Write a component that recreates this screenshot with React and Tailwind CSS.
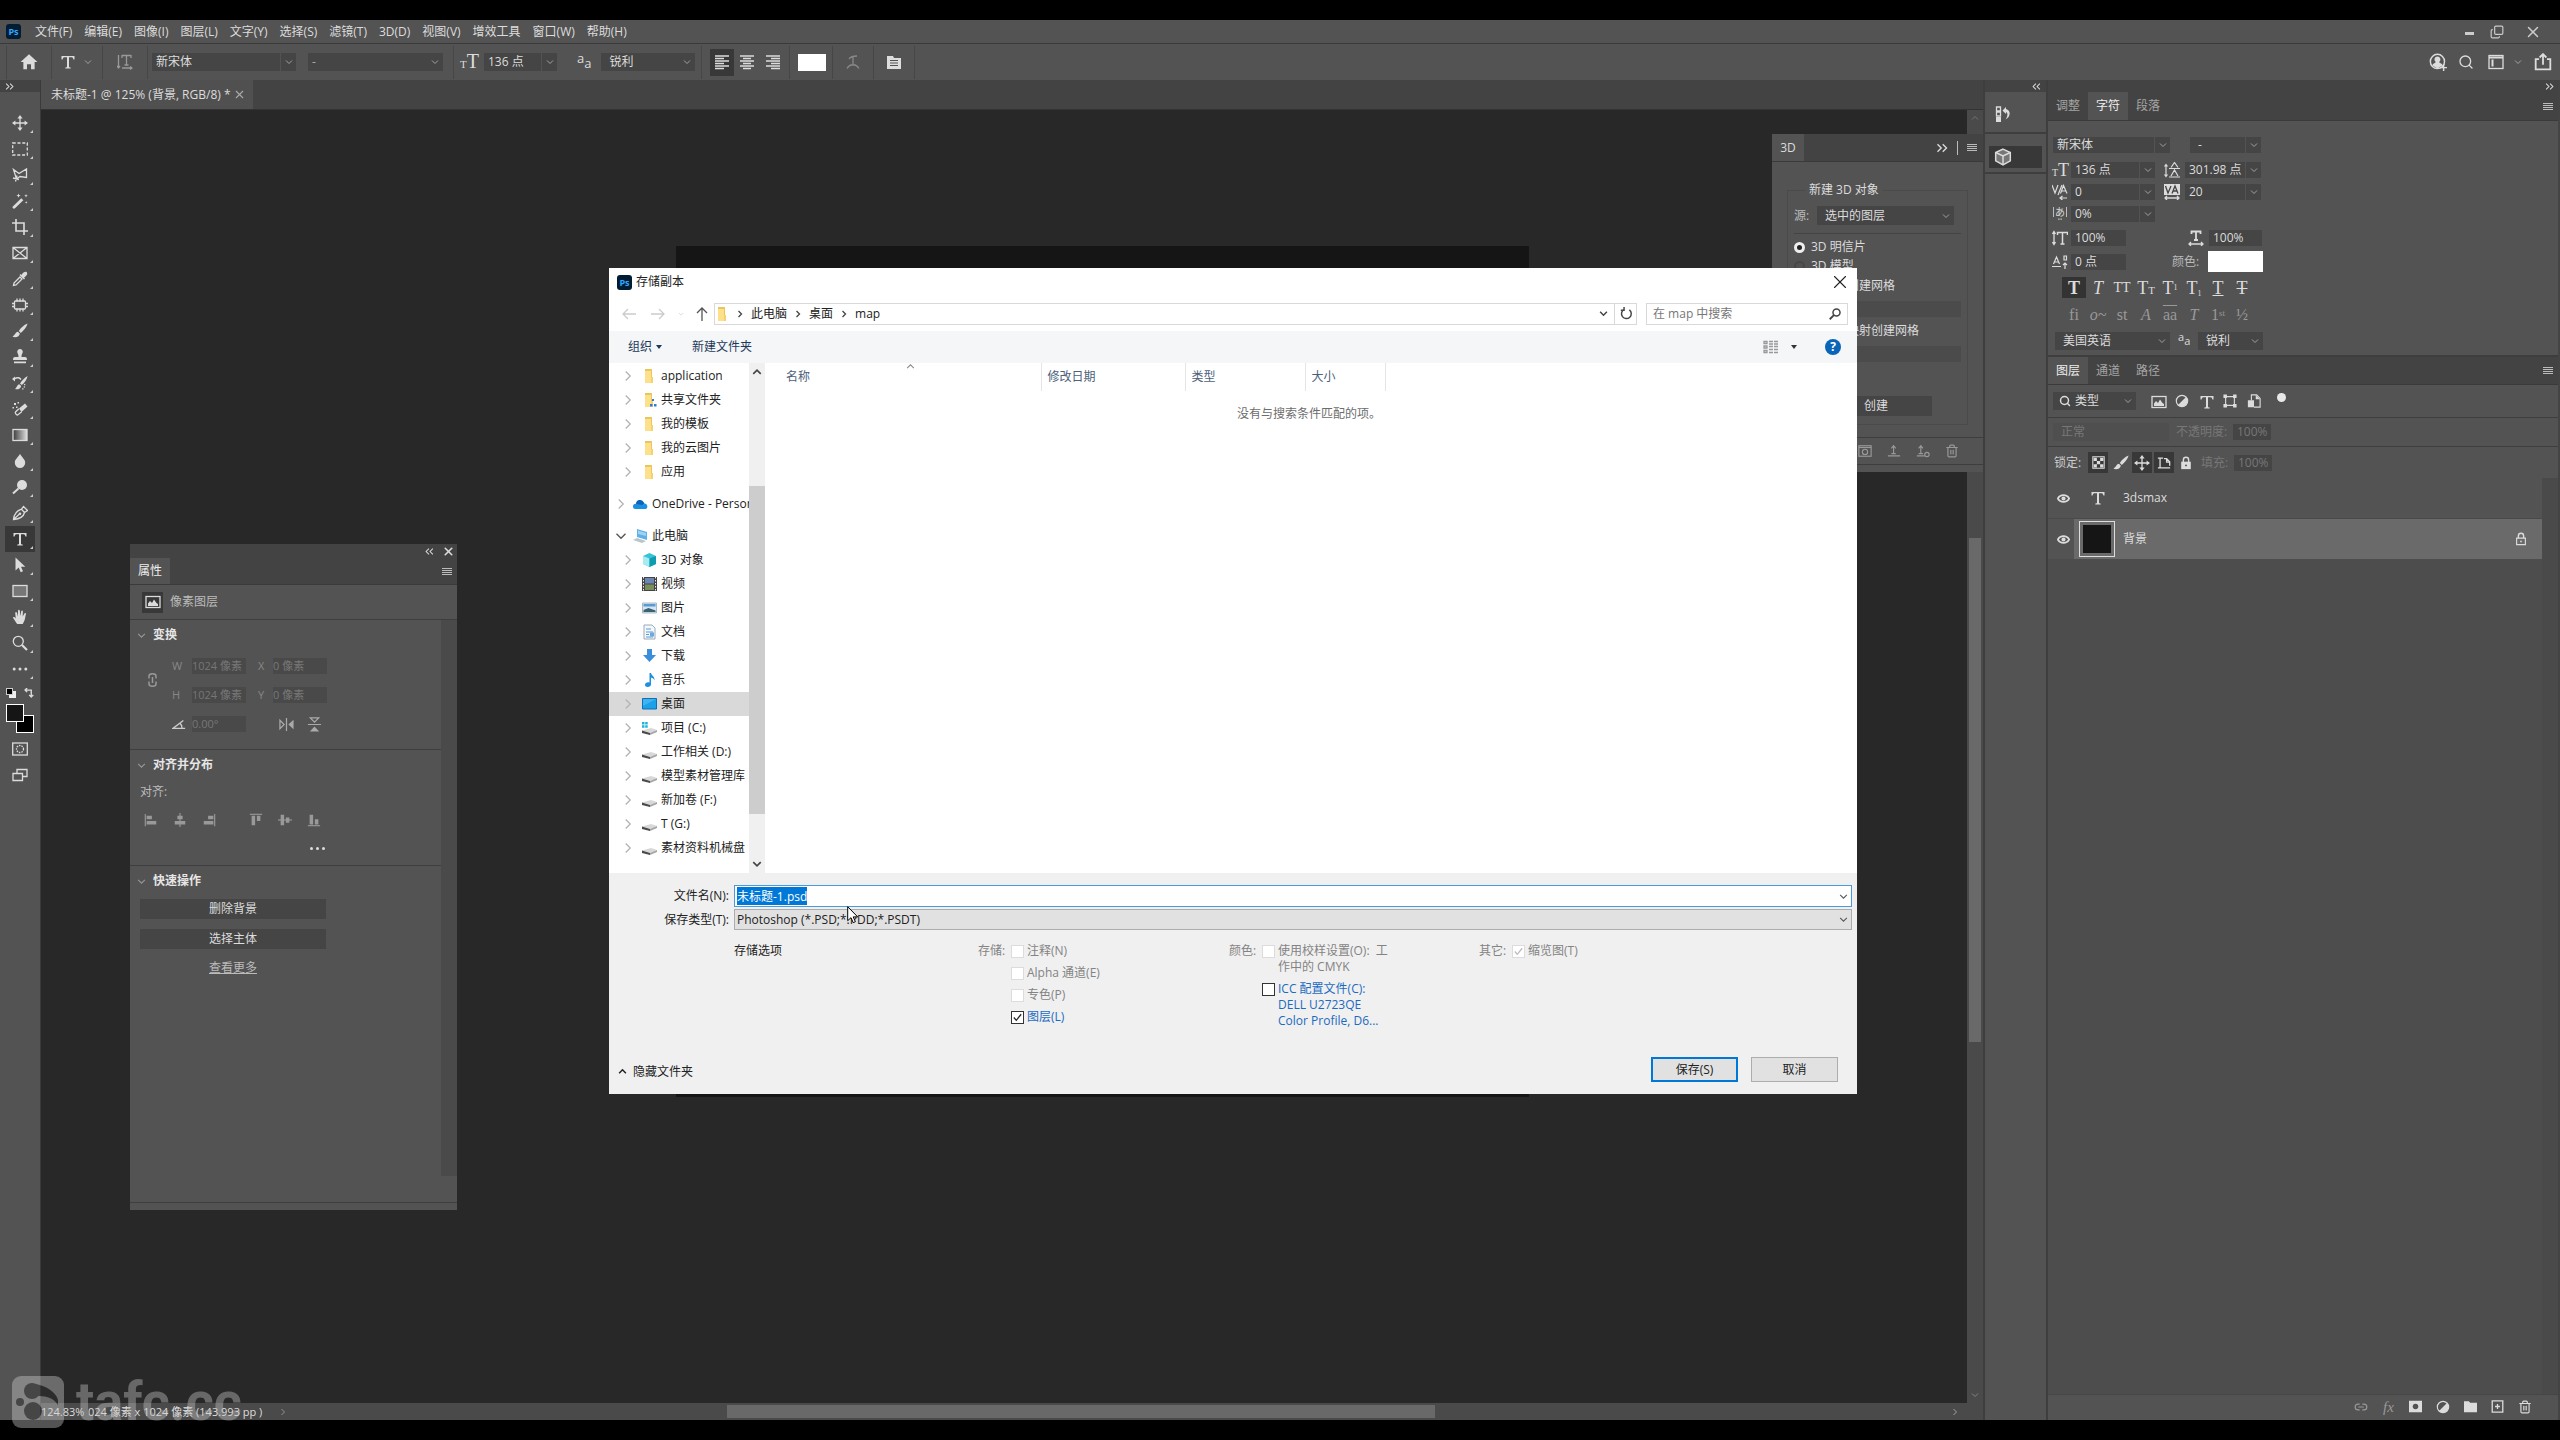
import React, { useEffect, useRef } from 'react';
import { Search, X, Copy, Trash2, Link2 } from 'lucide-react';

/** Small 16x16 stroke icon wrapper used by every hand drawn glyph. */
function Ic({ children, className = 'size-4' }) {
  return (
    <svg viewBox="0 0 16 16" className={`${className} shrink-0`} fill="none" stroke="currentColor" strokeWidth="1.3">
      {children}
    </svg>
  );
}

const F = { fill: 'currentColor', stroke: 'none' };

function Chev({ className = 'size-[9px]', bold }) {
  return (
    <svg viewBox="0 0 16 16" className={`${className} shrink-0`} fill="none" stroke="currentColor" strokeWidth={bold ? 2.6 : 1.8}>
      <path d="M2 5l6 6 6-6" />
    </svg>
  );
}

function Chevs({ className = 'size-[10px]' }) {
  return (
    <svg viewBox="0 0 16 16" className={`${className} shrink-0`} fill="none" stroke="currentColor" strokeWidth="1.8">
      <path d="M2 3l5 5-5 5M9 3l5 5-5 5" />
    </svg>
  );
}

function PsLogo() {
  return (
    <span className="flex size-[15px] shrink-0 items-center justify-center rounded-[3px] bg-[#001d33] text-[9px] leading-none font-bold text-[#31a8ff]">
      Ps
    </span>
  );
}

/** Dark drop-down used in the option bar and panels. */
function DarkSelect({ label, value, className = '', split, dim }) {
  return (
    <div className={`relative shrink-0 bg-[#454545] ${className}`}>
      <select
        aria-label={label}
        disabled={dim}
        className="block size-full appearance-none truncate bg-transparent pr-4 pl-1 text-xs leading-4 outline-none"
      >
        <option>{value}</option>
      </select>
      <span
        className={`pointer-events-none absolute inset-y-0 right-0 flex w-4 items-center justify-center ${split ? 'border-l border-[#535353]' : ''}`}
      >
        <Chev className="size-2 text-[#aaa]" />
      </span>
    </div>
  );
}

function DarkInput({ label, value, className = '', disabled }) {
  return (
    <input
      aria-label={label}
      defaultValue={value}
      disabled={disabled}
      className={`h-4 shrink-0 bg-[#454545] px-1 text-xs leading-4 outline-none ${className}`}
    />
  );
}

function MenuLines() {
  return (
    <button aria-label="面板菜单" className="flex w-[10px] flex-col gap-px">
      <span className="h-px bg-[#bbb]" />
      <span className="h-px bg-[#bbb]" />
      <span className="h-px bg-[#bbb]" />
      <span className="h-px bg-[#bbb]" />
    </button>
  );
}

/* ---------- icons ---------- */

const moveIcon = (
  <Ic>
    <path d="M8 2v12M2 8h12" />
    <path {...F} d="M8 0l2.6 3.4H5.4zM8 16l2.6-3.4H5.4zM0 8l3.4-2.6v5.2zM16 8l-3.4-2.6v5.2z" />
  </Ic>
);
const brushIcon = (
  <Ic>
    <path {...F} d="M15.6.6C12 2 8.4 5.2 6.8 8l2 1.9C11.600 8 14.600 4.400 15.600.6zM6 8.800c-2.600.1-2.400 2.600-5.500 5 2.800 1 6.500.4 7.400-3z" />
  </Ic>
);
const typeIcon = (
  <Ic>
    <path {...F} d="M1.500 2h13v3.600h-1.100c-.3-1.700-.8-2.300-2.400-2.300H9v9.200c0 .8.500 1 1.700 1.100v.9H5.300v-.9c1.200-.1 1.700-.3 1.700-1.100V3.300H5c-1.600 0-2.100.6-2.400 2.300H1.500z" />
  </Ic>
);
const pictureIcon = (
  <Ic>
    <rect x="1" y="2.500" width="14" height="11" />
    <path {...F} d="M3 12V9.500l2-2.500 2 2 2-3.500 2.500 3.500L13 10v2z" />
  </Ic>
);
const halfCircleIcon = (
  <Ic className="size-[14px]">
    <circle cx="8" cy="8" r="6.500" />
    <path {...F} d="M12.600 3.400a6.500 6.500 0 0 1-9.200 9.200z" />
  </Ic>
);

const tools = [
  { name: '移动', icon: moveIcon },
  { name: '矩形选框', icon: <Ic><rect x=".7" y="2" width="14.600" height="12" strokeDasharray="3 1.800" /></Ic> },
  { name: '套索', icon: <Ic><path d="M1.500 2.500l5.500 4 7.500-4.500v8.500L8 9.500 4.500 12zM5 8.500l-1.500 6M1 11l6 1.500" /></Ic> },
  {
    name: '魔棒',
    icon: (
      <Ic>
        <path {...F} d="M.8 13.500L9.300 5.200l2 2L3 15.300c-1.500 1-3.200-.4-2.200-1.800z" />
        <path {...F} d="M6.500.5l.6 1.500 1.500.6-1.500.6-.6 1.500-.6-1.500L4.400 2.600l1.500-.6zM14 1l.5 1.200 1.300.5-1.300.5L14 4.500l-.5-1.300-1.200-.5 1.200-.5zM14.200 8l.4 1 1 .4-1 .4-.4 1-.4-1-1-.4 1-.4z" />
      </Ic>
    ),
  },
  { name: '裁剪', icon: <Ic><path strokeWidth="1.600" d="M4 0v12h12M0 4h12v12" /></Ic> },
  { name: '图框', icon: <Ic><path d="M1 2.500h14v11H1zM1 2.500l14 11M15 2.500l-14 11" /></Ic> },
  {
    name: '吸管',
    icon: (
      <Ic>
        <path d="M1.500 14.500l.5-2.500 6-6 2 2-6 6z" />
        <path {...F} d="M7.500 4l1-1 1 .9C11 1.500 12.500.4 14.300.7c1.600 1.400 1.400 3.300-2.200 5.800l.9 1-1 1z" />
      </Ic>
    ),
  },
  {
    name: '修补',
    icon: (
      <Ic>
        <rect x="2.500" y="4" width="11" height="8" rx="1" />
        <path d="M5 1.500v3M8 1.500v3M11 1.500v3M5 11.500v3M8 11.500v3M11 11.500v3M0 6.500h3M0 9.500h3M13 6.500h3M13 9.500h3" />
      </Ic>
    ),
  },
  { name: '画笔', icon: brushIcon },
  {
    name: '图章',
    icon: (
      <Ic>
        <path {...F} d="M8 0a2.800 2.800 0 0 1 2.600 3.800C10 5 9.500 6 9.500 8H13c1.500 0 2 .8 2 3H1c0-2.200.5-3 2-3h3.500c0-2-.5-3-1.100-4.200A2.800 2.800 0 0 1 8 0zM2 12.500h12v1.800H2z" />
      </Ic>
    ),
  },
  {
    name: '历史记录画笔',
    icon: (
      <Ic>
        <path {...F} d="M15.600 1C12.500 2.500 9.500 6 8 8.500l1.800 1.600C12.500 8 15 4.500 15.600 1zM7.300 9.200c-2 .1-1.800 2.400-4.300 4.800 2.400.8 5.600.2 6.200-3zM0 4l3-2.500V6.500z" />
        <path d="M2.500 4c2.500-2 5-1.500 6.500.5" />
        <path strokeDasharray="1.200 1.200" d="M12.500 9c.8 2-.5 4.500-2.500 5.500" />
      </Ic>
    ),
  },
  {
    name: '橡皮擦',
    icon: (
      <Ic>
        <path {...F} d="M7 7.500l6-5 2.500 3-6 5.500z" />
        <path d="M6.800 7.800L3.500 11c-.8 1 .8 3.300 2.200 3l4-3.300" />
        <path {...F} d="M2 2h2v2H2zM5.500 1h1.500v1.500H5.500zM.5 6H2v1.500H.5zM4 5.500h1.500V7H4z" />
      </Ic>
    ),
  },
  {
    name: '渐变',
    icon: (
      <Ic>
        <defs>
          <linearGradient id="ramp"><stop stopColor="#3b3b3b" /><stop offset="1" stopColor="#ddd" /></linearGradient>
        </defs>
        <rect x="1" y="2.500" width="14" height="11" fill="url(#ramp)" />
      </Ic>
    ),
  },
  { name: '模糊', icon: <Ic><path {...F} d="M8 .8c1 3 5.200 5 5.200 9a5.200 5.200 0 0 1-10.400 0c0-4 4.200-6 5.200-9z" /></Ic> },
  { name: '减淡', icon: <Ic><circle {...F} cx="10" cy="6" r="5" /><path strokeWidth="2" d="M6.500 9.500L1 14.500" /></Ic> },
  {
    name: '钢笔',
    icon: (
      <Ic>
        <path d="M1.500 14.500C2 9.500 4 6 9.500 4.200l3 3.300C11.500 12 7.500 14 1.500 14.500zL7.500 9M9.500 4.200L11.500 1.500l4 4-3 2" />
        <circle {...F} cx="8" cy="8.800" r="1.300" />
      </Ic>
    ),
  },
  { name: '文字', icon: typeIcon, active: true },
  { name: '路径选择', icon: <Ic><path {...F} d="M3.500.5v13l3.200-3 2 4.800 2.300-1-2-4.600h4.300z" /></Ic> },
  { name: '矩形', icon: <Ic><rect x="1" y="2.500" width="14" height="11" fill="#777" /></Ic> },
  {
    name: '抓手',
    icon: (
      <Ic>
        <path {...F} d="M5.200 15C3.500 13 2.500 11 .8 8.600c.8-1 2-.6 3 .9L3.200 4c.1-1.200 1.500-1.200 1.800 0l.9 3.500L6 1.800c.1-1.300 1.700-1.300 1.800 0L8.300 7l.9-4.700c.3-1.200 1.700-1 1.700.2L10.700 7.500l1.700-3c.6-1 1.800-.5 1.500.6-.8 3.400-.9 7-3.200 9.900z" />
      </Ic>
    ),
  },
  { name: '缩放', icon: <Ic><circle cx="6.300" cy="6.300" r="5" /><path strokeWidth="2.200" d="M10 10l5 5" /></Ic> },
  { name: '更多工具', icon: <Ic><circle {...F} cx="2.200" cy="8" r="1.500" /><circle {...F} cx="8" cy="8" r="1.500" /><circle {...F} cx="13.800" cy="8" r="1.500" /></Ic> },
];

/* ---------- top bars ---------- */

const menus = ['文件(F)', '编辑(E)', '图像(I)', '图层(L)', '文字(Y)', '选择(S)', '滤镜(T)', '3D(D)', '视图(V)', '增效工具', '窗口(W)', '帮助(H)'];

function MenuBar() {
  return (
    <header className="flex h-6 shrink-0 items-center border-b border-[#3a3a3a] pl-[6px]">
      <PsLogo />
      <nav className="ml-[14px] flex flex-1 gap-3">
        {menus.map((m) => (
          <button key={m} className="text-xs leading-4">{m}</button>
        ))}
      </nav>
      <div className="flex items-center gap-4 pr-[18px] text-[#ccc]">
        <button aria-label="最小化" className="mt-1 h-[3px] w-[9px] bg-[#ccc]" />
        <button aria-label="还原"><Copy className="size-[14px] -scale-x-100 rotate-180" /></button>
        <button aria-label="关闭" className="ml-1"><X className="size-[18px]" /></button>
      </div>
    </header>
  );
}

function Rule() {
  return <span className="h-[33px] w-px shrink-0 bg-[#464646]" />;
}

function OptionsBar() {
  return (
    <div className="flex h-9 shrink-0 items-center pl-[6px]">
      <Rule />
      <button aria-label="主页" className="mx-[13px]">
        <Ic className="size-[18px]"><path {...F} d="M8 1l7.500 7H13v6.500H9.800V10H6.200v4.500H3V8H.5z" /></Ic>
      </button>
      <Rule />
      <button aria-label="文字工具" className="ml-2 flex items-center gap-2">{typeIcon}<Chev className="size-2 text-[#aaa]" /></button>
      <span className="w-[10px]" />
      <Rule />
      <button aria-label="切换文本取向" className="mx-[14px] text-[#999]">
        <Ic><path d="M1.500 1v13M0 12l1.500 2L3 12M5 14h10M13 12.500l2 1.500-2 1.500M5 1.500h9M9.500 1.500V11M5 1v3M14 1v3M7.500 11h4" /></Ic>
      </button>
      <Rule />
      <DarkSelect label="字体" value="新宋体" split className="ml-1 h-[18px] w-36" />
      <DarkSelect label="字体样式" value="-" dim className="ml-3 h-[18px] w-[135px] text-[#aaa]" />
      <span className="w-[10px]" />
      <Rule />
      <span className="ml-[6px] flex w-5 items-baseline font-['Liberation_Serif',serif] text-[11px] leading-5">T<b className="text-xl leading-5 font-normal">T</b></span>
      <DarkSelect label="字体大小" value="136 点" split className="ml-1 h-[18px] w-[73px]" />
      <span className="ml-5 flex items-start text-[13px] leading-4"><span className="-mt-1">a</span><span className="mt-px">a</span></span>
      <DarkSelect label="消除锯齿" value="锐利" className="ml-[10px] h-[18px] w-[94px] pl-1" />
      <span className="w-[6px]" />
      <Rule />
      <div className="ml-2 flex">
        <button aria-label="左对齐" className="flex h-[27px] w-6 items-center justify-center bg-[#383838]"><Ic><path d="M1 2h14M1 4.500h9M1 7h14M1 9.500h9M1 12h14M1 14.500h9" /></Ic></button>
        <button aria-label="居中对齐" className="flex h-[27px] w-[26px] items-center justify-center"><Ic><path d="M1 2h14M4 4.500h8M1 7h14M4 9.500h8M1 12h14M4 14.500h8" /></Ic></button>
        <button aria-label="右对齐" className="flex h-[27px] w-[26px] items-center justify-center"><Ic><path d="M1 2h14M6 4.500h9M1 7h14M6 9.500h9M1 12h14M6 14.500h9" /></Ic></button>
      </div>
      <span className="w-[3px]" />
      <Rule />
      <button aria-label="文本颜色" className="ml-2 h-[17px] w-7 bg-white" />
      <span className="w-[6px]" />
      <Rule />
      <button aria-label="变形文字" className="mx-3 text-[#888]"><Ic><path d="M2 14.500c3-5 9-5 12 0M4 5c2-3 5-3 8-3M8 2.500V11M5 11h6" /></Ic></button>
      <Rule />
      <button aria-label="切换面板" className="mx-3 text-[#ddd]">
        <Ic><path {...F} fillRule="evenodd" d="M1 2h6l1 2h7v11H1zM4 6v1h8V6zM4 8.500v1h8v-1zM4 11v1h8v-1z" /></Ic>
      </button>
      <Rule />
      <div className="ml-auto flex items-center pr-2">
        <button aria-label="账户">
          <Ic className="size-[18px]">
            <circle cx="7.500" cy="7.500" r="6.300" />
            <path {...F} d="M7.500 3.200a2.600 2.600 0 0 1 1.600 4.700c0 1 3 1.400 3 3.200l-4.600 2.700L3 11.100c0-1.800 2.900-2.200 2.900-3.200A2.600 2.600 0 0 1 7.500 3.200z" />
            <path d="M13 10v6M10 13h6" />
          </Ic>
        </button>
        <button aria-label="搜索" className="ml-[11px]"><Search className="size-4" /></button>
        <button aria-label="工作区" className="ml-[14px] flex items-center gap-[10px]">
          <Ic><rect x="1" y="1.500" width="14" height="13" /><path d="M1 3.500h14M4.500 5.500v7" strokeWidth="2" /></Ic>
          <Chev className="size-2 text-[#aaa]" />
        </button>
        <button aria-label="共享" className="ml-3"><Ic className="size-[18px]"><path strokeWidth="1.600" d="M4.500 5.500H1.500v9h13v-9h-3M8 10.500V1.500M5 4l3-3 3 3" /></Ic></button>
      </div>
    </div>
  );
}

/* ---------- left tool bar ---------- */

function ToolBar() {
  return (
    <aside className="flex w-[41px] shrink-0 flex-col border-r border-[#3a3a3a]">
      <div className="flex h-3 items-center bg-[#434343] pl-[5px]"><Chevs className="size-[9px]" /></div>
      <div className="flex flex-col px-[5px] pt-[18px]">
        {tools.map((t) => (
          <button
            key={t.name}
            aria-label={t.name}
            className={`relative flex h-[26px] w-[30px] items-center justify-center ${t.active ? 'bg-[#383838]' : ''}`}
          >
            {t.icon}
            <span className="absolute right-[2px] bottom-[3px] size-0 border-b-[3px] border-l-[3px] border-b-[#ccc] border-l-transparent" />
          </button>
        ))}
        <div className="flex h-[22px] items-center justify-between px-px">
          <span className="relative size-[10px]"><i className="absolute right-0 bottom-0 size-[7px] bg-[#eee]" /><i className="absolute top-0 left-0 size-[7px] border border-[#ccc] bg-black" /></span>
          <Ic className="size-[11px]"><path d="M4 3h8v9M6 0L3 3l3 3M9 10l3 3 3-3" strokeWidth="2" /></Ic>
        </div>
        <div className="relative h-8">
          <button aria-label="背景色" className="absolute top-[11px] left-[11px] size-[18px] border border-white bg-black" />
          <button aria-label="前景色" className="absolute top-0 left-px size-[18px] border border-white bg-[#151515]" />
        </div>
        <button aria-label="快速蒙版" className="flex h-[26px] items-center justify-center"><Ic><rect x=".7" y="2" width="14.600" height="12" /><circle cx="8" cy="8" r="3.500" strokeDasharray="1.500 1" /></Ic></button>
        <button aria-label="屏幕模式" className="flex h-[26px] items-center justify-center"><Ic><path d="M5 6V2.500h10v7h-4M1 6.500h9.500v7H1z" /></Ic></button>
      </div>
    </aside>
  );
}

/* ---------- canvas ---------- */

function Workspace() {
  return (
    <main className="flex min-w-0 flex-1 flex-col bg-[#282828]">
      <div className="flex h-[30px] border-b border-[#333] bg-[#434343]">
        <div className="flex items-center gap-[2px] bg-[#505050] pr-[7px] pl-[10px]">
          <span className="text-xs leading-4">未标题-1 @ 125% (背景, RGB/8) *</span>
          <button aria-label="关闭文档"><X className="size-[13px] text-[#aaa]" /></button>
        </div>
      </div>
      <div className="flex flex-1">
        <div className="relative flex-1">
          <div className="absolute top-[136px] left-[635px] h-[851px] w-[853px] bg-[#151515]" />
        </div>
        <div className="flex w-4 flex-col items-center bg-[#4a4a4a] py-1">
          <Chev className="size-2 rotate-180 text-[#777]" />
          <div className="mt-[416px] h-[504px] w-3 bg-[#696969]" />
          <Chev className="mt-auto size-2 text-[#888]" />
        </div>
      </div>
      <div className="flex h-[17px] items-center bg-[#4a4a4a] pr-6 text-[11px] leading-4">
        <span className="w-[47px]">124.83%</span>
        <span className="w-[191px] whitespace-nowrap text-[#ddd]">024 像素 x 1024 像素 (143.993 pp )</span>
        <Chev className="size-2 -rotate-90 text-[#999]" />
        <div className="ml-[440px] h-[13px] w-[708px] bg-[#696969]" />
        <Chev className="ml-auto size-2 -rotate-90 text-[#aaa]" />
      </div>
    </main>
  );
}

/* ---------- right docks ---------- */

function IconDock() {
  return (
    <aside className="flex w-[65px] shrink-0 flex-col border-x-2 border-[#3e3e3e]">
      <div className="flex h-3 items-center justify-end bg-[#434343] pr-[5px]"><Chevs className="size-[9px] rotate-180" /></div>
      <div className="flex h-[42px] items-center border-b-2 border-[#3e3e3e] pt-1 pl-[10px]">
        <button aria-label="历史记录">
          <Ic><path d="M1.500 1h4v4h-4zM1.500 6h4v4h-4z" /><path {...F} d="M1 11h5v5H1zM7.500 4.500L11 1v2c5 1 5 8-.5 10.500C13 10 13 7 11 6v2z" /></Ic>
        </button>
      </div>
      <div className="flex h-10 flex-col border-b-2 border-[#3e3e3e] pt-3">
        <button aria-label="3D" className="mx-1 flex h-[22px] items-center bg-[#383838] pl-[5px]">
          <Ic className="size-[18px]"><path d="M8 1l6.500 3v7.500L8 15l-6.500-3.500V4z" fill="#777" /><path d="M1.500 4L8 7l6.500-3M8 7v8" /></Ic>
        </button>
      </div>
    </aside>
  );
}

function PanelTabs({ tabs, active, className }) {
  return (
    <div className={`flex shrink-0 border-b border-[#3a3a3a] bg-[#434343] pr-[5px] ${className}`}>
      {tabs.map((t) => (
        <button
          key={t}
          className={`w-10 text-xs leading-4 ${t === active ? 'bg-[#535353] text-[#eee]' : 'text-[#a5a5a5]'}`}
        >
          {t}
        </button>
      ))}
      <div className="ml-auto flex items-center"><MenuLines /></div>
    </div>
  );
}

const T = "font-['Liberation_Serif',serif] leading-none";

function CharacterPanel() {
  const styles = [
    { n: '仿粗体', g: <b>T</b>, on: true },
    { n: '仿斜体', g: <i>T</i> },
    { n: '全部大写', g: <span className="text-sm">TT</span> },
    { n: '小型大写', g: <span>T<small className="text-[11px]">T</small></span> },
    { n: '上标', g: <span>T<sup className="text-[8px]">1</sup></span> },
    { n: '下标', g: <span>T<sub className="text-[8px]">1</sub></span> },
    { n: '下划线', g: <u>T</u> },
    { n: '删除线', g: <s>T</s> },
  ];
  const features = [
    { n: '标准连字', g: 'fi' },
    { n: '上下文替代字', g: <i>o~</i> },
    { n: '自由连字', g: 'st' },
    { n: '花饰字', g: <i>A</i> },
    { n: '文体替代字', g: <span className="overline">aa</span> },
    { n: '标题替代字', g: <i>T</i> },
    { n: '序数字', g: <span>1<sup className="text-[9px]">st</sup></span> },
    { n: '分数字', g: '½' },
  ];
  return (
    <section className="flex flex-col pt-4 pb-[5px] pl-1">
      <div className="flex h-4 pl-px">
        <DarkSelect label="字体" value="新宋体" split className="w-[117px]" />
        <DarkSelect label="样式" value="-" split dim className="ml-5 w-[71px] pl-1" />
      </div>
      <div className="mt-[9px] flex h-4 items-center">
        <span className={`flex w-4 items-baseline text-[10px] ${T}`}>T<span className="text-lg leading-none">T</span></span>
        <DarkSelect label="大小" value="136 点" split className="ml-[3px] h-4 w-[84px]" />
        <Ic className="ml-[9px] size-4"><path d="M2 3v11M.5 4.500L2 2.500l1.500 2M.5 12.500l1.500 2 1.500-2M5 6.500h11M5 15h11M7 5.500L10.500.5l3.500 5M7 14l3.500-6 3.500 6" strokeWidth="1.200" /></Ic>
        <DarkSelect label="行距" value="301.98 点" split className="ml-[5px] h-4 w-[76px]" />
      </div>
      <div className="mt-[6px] flex h-4 items-center">
        <Ic><path d="M0 1l3 8 3-8M6 11l4-10M8.500 9.500l3-8 3.500 8M9.500 7h4M8 14h7M10.500 12L8 14l2.500 2" strokeWidth="1.200" /></Ic>
        <DarkSelect label="字距微调" value="0" split className="ml-[3px] h-4 w-[84px]" />
        <Ic className="ml-[9px] size-4"><path {...F} d="M0 0h16v11H0z" /><path stroke="#444" d="M1.500 2l2.500 7 3-7M8 9.500l3-7.500 3 7.500M9 7h4" /><path d="M1 14h14M3 12l-2 2 2 2M13 12l2 2-2 2" /></Ic>
        <DarkSelect label="字距" value="20" split className="ml-[5px] h-4 w-[76px]" />
      </div>
      <div className="mt-[6px] flex h-4 items-center">
        <span className="flex w-4 flex-col items-center">
          <span className="flex w-[14px] justify-center border-x border-[#bbb] text-[10px] leading-[10px]">あ</span>
          <Ic className="h-1 w-4"><path d="M1 8h5M10 8h5" strokeWidth="5" /></Ic>
        </span>
        <DarkSelect label="比例间距" value="0%" split className="ml-[3px] h-4 w-[84px]" />
      </div>
      <div className="mt-2 flex h-4 items-center">
        <Ic><path d="M2 2v12M.5 4L2 1.500 3.500 4M.5 12L2 14.500 3.500 12" /><path d="M5.500 5V2.500h10V5M10.500 2.500V14M8.500 14h4" strokeWidth="1.500" /></Ic>
        <DarkInput label="垂直缩放" value="100%" className="ml-[3px] w-[55px]" />
        <Ic className="ml-[62px] size-4"><path d="M3.500 4V1.500h9V4M8 1.500V10M6 10h4" strokeWidth="1.800" /><path d="M1 14h14M3 12l-2 2 2 2M13 12l2 2-2 2" /></Ic>
        <DarkInput label="水平缩放" value="100%" className="ml-[5px] w-[53px]" />
      </div>
      <div className="mt-[5px] flex h-[21px] items-center">
        <Ic><path d="M0 12.500h9M1.500 10L4.500 3l3 7M2.500 8h4M13 15V9M11 11l2-2 2 2M12 2h2.500v4H12z" strokeWidth="1.200" /></Ic>
        <DarkInput label="基线偏移" value="0 点" className="ml-[3px] w-[55px]" />
        <span className="ml-[46px] w-9 text-xs leading-4 text-[#bbb]">颜色:</span>
        <button aria-label="颜色" className="h-[21px] w-[55px] bg-white" />
      </div>
      <div className="mt-[5px] flex h-[21px] pl-[10px]">
        {styles.map((s) => (
          <button key={s.n} aria-label={s.n} className={`w-6 text-center text-lg ${T} ${s.on ? 'bg-[#333]' : ''}`}>
            {s.g}
          </button>
        ))}
      </div>
      <div className="mt-[7px] flex h-5 pl-[10px] text-[#999]">
        {features.map((f) => (
          <button key={f.n} aria-label={f.n} className={`w-6 text-center text-base ${T}`}>{f.g}</button>
        ))}
      </div>
      <div className="mt-[7px] flex h-[18px] items-center pl-[3px]">
        <DarkSelect label="语言" value="美国英语" className="h-[18px] w-[115px] pl-1" />
        <span className="mx-2 flex w-3 items-start text-[11px] leading-3"><span className="-mt-1">a</span><span>a</span></span>
        <DarkSelect label="消除锯齿" value="锐利" className="h-[18px] w-[65px] pl-1" />
      </div>
    </section>
  );
}

function Eye() {
  return (
    <Ic className="size-[13px]">
      <path d="M1 8c3-5.500 11-5.500 14 0-3 5.500-11 5.500-14 0z" strokeWidth="2" />
      <circle {...F} cx="8" cy="8" r="2.500" />
    </Ic>
  );
}

function Lock({ open }) {
  return (
    <Ic className="size-[14px]">
      <path d="M5 7V4.500a3 3 0 0 1 6 0V7" strokeWidth="1.600" />
      {open ? <path d="M3 7h10v7.500H3z" /> : <path {...F} d="M2.500 6.500h11V15h-11z" />}
      <circle cx="8" cy="10.800" r="1" fill={open ? 'currentColor' : '#444'} stroke="none" />
    </Ic>
  );
}

function LayersPanel() {
  return (
    <section className="flex flex-1 flex-col border-t-2 border-[#3e3e3e]">
      <PanelTabs tabs={['图层', '通道', '路径']} active="图层" className="h-[28px]" />
      <div className="flex h-[33px] items-center border-b border-[#3e3e3e] pl-[5px]">
        <div className="flex h-[18px] w-[83px] items-center bg-[#454545] pl-[6px]">
          <Search className="size-3 shrink-0" strokeWidth={3} />
          <DarkSelect label="滤镜类型" value="类型" className="h-[18px] w-[65px]" />
        </div>
        <div className="ml-[15px] flex items-center gap-[10px]">
          <button aria-label="像素图层滤镜" className="flex size-[14px]">{pictureIcon}</button>
          <button aria-label="调整图层滤镜">{halfCircleIcon}</button>
          <button aria-label="文字图层滤镜" className="flex size-[14px]">{typeIcon}</button>
          <button aria-label="形状图层滤镜"><Ic className="size-[14px]"><path d="M3 3h10v10H3z" /><path {...F} d="M.5.5h4v4h-4zM11.500.5h4v4h-4zM.5 11.500h4v4h-4zM11.500 11.500h4v4h-4z" /></Ic></button>
          <button aria-label="智能对象滤镜"><Ic className="size-[14px]"><path d="M5 7V1h6l4 4v10H8" /><path {...F} d="M1 7h7v8H1zM10 1l5 5h-5z" /></Ic></button>
          <button aria-label="滤镜开关" className="mb-2 ml-[6px] size-[9px] rounded-full bg-[#e8e8e8]" />
        </div>
      </div>
      <div className="flex h-[29px] items-center border-b border-[#3e3e3e] pl-[5px] text-xs leading-4 text-[#777]">
        <span className="flex h-[18px] w-[116px] items-center bg-[#4f4f4f] pl-2">正常</span>
        <span className="ml-[7px] w-[57px]">不透明度:</span>
        <DarkInput label="不透明度" value="100%" disabled className="w-[38px]" />
      </div>
      <div className="flex h-[31px] items-center pl-[6px] text-xs leading-4">
        <span className="w-[34px] text-[#ccc]">锁定:</span>
        <button aria-label="锁定透明像素" className="flex h-[21px] w-5 items-center justify-center bg-[#383838]">
          <Ic className="size-[13px]"><path d="M1 1h14v14H1z" /><path {...F} d="M2 2h4v4H2zM10 2h4v4h-4zM6 6h4v4H6zM2 10h4v4H2zM10 10h4v4h-4z" /></Ic>
        </button>
        <button aria-label="锁定图像像素" className="mx-[5px] flex w-[14px]">{brushIcon}</button>
        <button aria-label="锁定位置" className="flex h-[21px] w-5 items-center justify-center bg-[#383838] p-[3px]">{moveIcon}</button>
        <button aria-label="防止自动嵌套" className="ml-[2px] flex h-[21px] w-5 items-center justify-center bg-[#383838]">
          <Ic className="size-[14px]"><path d="M3.500 2v11M1 2.500h6M1 13.500h14M8 3h3l3.500 3.500V11M11 3v4h3.500" strokeWidth="1.500" /></Ic>
        </button>
        <button aria-label="锁定全部" className="ml-[5px]"><Lock /></button>
        <span className="ml-[8px] w-[33px] text-[#777]">填充:</span>
        <DarkInput label="填充" value="100%" disabled className="w-[38px] text-[#777]" />
      </div>
      <div className="flex flex-1 bg-[#4d4d4d]">
        <ul className="flex-1">
          <li className="flex h-[41px] items-center border-b border-[#4a4a4a] bg-[#535353] pl-[9px]">
            <button aria-label="切换可见性"><Eye /></button>
            <span className="ml-[20px] flex size-4">{typeIcon}</span>
            <span className="ml-[17px] text-xs leading-4">3dsmax</span>
          </li>
          <li className="flex h-10 items-center bg-[#535353] pl-[9px]">
            <button aria-label="切换可见性"><Eye /></button>
            <div className="ml-1 flex h-full flex-1 items-center bg-[#6a6a6a] pr-[14px]">
              <span className="ml-[5px] size-9 border border-[#ddd] p-[3px]"><i className="block size-full bg-[#151515]" /></span>
              <span className="ml-2 text-xs leading-4">背景</span>
              <span className="ml-auto"><Lock open /></span>
            </div>
          </li>
        </ul>
        <div className="w-4 bg-[#4a4a4a]" />
      </div>
      <footer className="flex h-[26px] items-center justify-end gap-[14px] border-t border-[#464646] pr-[26px] pb-[2px]">
        <button aria-label="链接图层" className="text-[#999]"><Link2 className="size-[14px]" /></button>
        <button aria-label="图层样式" className="w-[13px] font-['Liberation_Serif',serif] text-[15px] leading-4 text-[#999] italic">fx</button>
        <button aria-label="添加蒙版"><Ic className="size-[13px]"><path {...F} fillRule="evenodd" d="M0 1h16v14H0zM8 4.500a3.500 3.500 0 1 0 .01 0z" /></Ic></button>
        <button aria-label="调整图层">{halfCircleIcon}</button>
        <button aria-label="新建组"><Ic className="size-[13px]"><path {...F} d="M0 1.500h6l1.500 2H16V15H0z" /></Ic></button>
        <button aria-label="新建图层"><Ic className="size-[13px]"><path d="M1.500 1h13v14h-13zM8 5v6M5 8h6" strokeWidth="1.600" /></Ic></button>
        <button aria-label="删除图层"><Trash2 className="size-[14px]" /></button>
      </footer>
    </section>
  );
}

function RightDock() {
  return (
    <aside className="flex w-[512px] shrink-0 flex-col border-r-2 border-[#444]">
      <div className="flex h-3 items-center justify-end bg-[#434343] pr-1"><Chevs className="size-[9px]" /></div>
      <PanelTabs tabs={['调整', '字符', '段落']} active="字符" className="h-[29px]" />
      <CharacterPanel />
      <LayersPanel />
    </aside>
  );
}

/* ---------- floating panels ---------- */

function Section({ title, children, className = '' }) {
  return (
    <section className={`border-b border-[#3e3e3e] pl-[7px] ${className}`}>
      <h3 className="flex h-[30px] items-center gap-[7px] text-xs font-bold text-[#e6e6e6]">
        <Chev className="size-[9px] text-[#999]" />
        {title}
      </h3>
      {children}
    </section>
  );
}

const alignIcons = [
  { n: '左对齐', d: 'M1.500 1v14', f: 'M3 3h6v4H3zM3 9h11v4H3z' },
  { n: '水平居中', d: 'M8 0v16', f: 'M5 3h6v4H5zM2 9h12v4H2z' },
  { n: '右对齐', d: 'M14.500 1v14', f: 'M7 3h6v4H7zM2 9h11v4H2z' },
  { n: '顶对齐', d: 'M1 1.500h14', f: 'M3 3h4v11H3zM9 3h4v6H9z' },
  { n: '垂直居中', d: 'M0 8h16', f: 'M3 2h4v12H3zM9 5h4v6H9z' },
  { n: '底对齐', d: 'M1 14.500h14', f: 'M3 2h4v11H3zM9 7h4v6H9z' },
];

function PropertiesPanel() {
  return (
    <aside className="absolute top-[544px] left-[130px] flex h-[666px] w-[327px] flex-col bg-[#535353]">
      <div className="flex h-[14px] items-center justify-end gap-[8px] bg-[#434343] pr-[2px]">
        <Chevs className="size-[9px] rotate-180" />
        <button aria-label="关闭面板"><X className="size-[13px]" strokeWidth={3} /></button>
      </div>
      <PanelTabs tabs={['属性']} active="属性" className="h-[27px]" />
      <div className="flex h-[35px] items-center gap-[7px] border-b border-[#3e3e3e] pl-3">
        <span className="flex h-[21px] w-[21px] items-center justify-center bg-[#383838]">{pictureIcon}</span>
        <span className="text-xs text-[#bbb]">像素图层</span>
      </div>
      <div className="flex flex-1">
        <div className="flex-1">
          <Section title="变换" className="h-[130px]">
            <div className="flex pl-2 text-[11px] leading-4 text-[#777]">
              <div className="mt-[22px] w-[27px]">
                <Ic className="size-4 text-[#999]"><path d="M4 6.500V4c0-3 7-3 7 0v2.500M4 9.500V12c0 3 7 3 7 0V9.500M7.500 5v6" strokeWidth="1.500" /></Ic>
              </div>
              <div className="flex flex-col gap-[13px] pt-2">
                <div className="flex items-center">
                  <label htmlFor="pw" className="w-5 text-[#888]">W</label><input id="pw" disabled defaultValue="1024 像素" className="w-[54px] bg-[#494949]" />
                  <label htmlFor="px" className="ml-3 w-[15px] text-[#888]">X</label><input id="px" disabled defaultValue="0 像素" className="w-[54px] bg-[#494949]" />
                </div>
                <div className="flex items-center">
                  <label htmlFor="ph" className="w-5 text-[#888]">H</label><input id="ph" disabled defaultValue="1024 像素" className="w-[54px] bg-[#494949]" />
                  <label htmlFor="py" className="ml-3 w-[15px] text-[#888]">Y</label><input id="py" disabled defaultValue="0 像素" className="w-[54px] bg-[#494949]" />
                </div>
                <div className="flex items-center">
                  <Ic className="size-[14px] text-[#ccc]"><path d="M15 13H1L13 4M9 7c2 1.500 2.500 4 2.500 6" strokeWidth="1.500" /></Ic>
                  <input aria-label="角度" disabled defaultValue="0.00°" className="ml-[6px] w-[54px] bg-[#494949]" />
                  <button aria-label="水平翻转" className="ml-[33px] text-[#aaa]"><Ic className="size-[15px]"><path d="M1 3.500v9L5.500 8zM8 1v14" /><path {...F} d="M15.500 3v10L10 8z" /></Ic></button>
                  <button aria-label="垂直翻转" className="ml-[13px] text-[#aaa]"><Ic className="size-[15px]"><path d="M3.500 1h9L8 5.500zM1 8h14" /><path {...F} d="M3 15.500h10L8 10z" /></Ic></button>
                </div>
              </div>
            </div>
          </Section>
          <Section title="对齐并分布" className="h-[116px]">
            <p className="pt-1 pl-[3px] text-xs leading-4 text-[#bbb]">对齐:</p>
            <div className="mt-[13px] flex gap-[15px] pl-[7px] text-[#999]">
              {alignIcons.map((a, i) => (
                <button key={a.n} aria-label={a.n} className={i === 3 ? 'ml-[18px]' : ''}>
                  <Ic className="size-[14px]"><path d={a.d} /><path {...F} d={a.f} /></Ic>
                </button>
              ))}
            </div>
            <button aria-label="更多对齐选项" className="mt-5 ml-[173px] flex gap-[3px]">
              <i className="size-[3px] rounded-full bg-[#ddd]" /><i className="size-[3px] rounded-full bg-[#ddd]" /><i className="size-[3px] rounded-full bg-[#ddd]" />
            </button>
          </Section>
          <Section title="快速操作" className="border-b-0">
            <div className="ml-[3px] flex w-[186px] flex-col items-center pt-[3px] text-xs">
              <button className="h-5 w-full bg-[#454545] leading-5">删除背景</button>
              <button className="mt-[10px] h-5 w-full bg-[#454545] leading-5">选择主体</button>
              <a href="#more" className="mt-[11px] leading-4 text-[#bbb] underline">查看更多</a>
            </div>
          </Section>
        </div>
        <div className="mb-[26px] w-4 bg-[#4a4a4a]" />
      </div>
      <div className="h-2 border-t border-[#3e3e3e]" />
    </aside>
  );
}

function ThreeDPanel() {
  return (
    <aside className="absolute top-[134px] left-[1772px] flex w-[211px] flex-col bg-[#535353] text-xs leading-4">
      <div className="flex h-7 items-center border-b border-[#3a3a3a] bg-[#434343] pr-[6px]">
        <button className="h-full w-8 bg-[#535353]">3D</button>
        <Chevs className="ml-auto size-3" />
        <span className="mx-[9px] h-[14px] w-px bg-[#bbb]" />
        <MenuLines />
      </div>
      <fieldset className="mx-[15px] mt-5 h-[243px] border border-[#4a4a4a] px-[6px]">
        <legend className="ml-[11px] px-1">新建 3D 对象</legend>
        <div className="mt-2 flex items-center">
          <span className="w-[23px] text-[#bbb]">源:</span>
          <DarkSelect label="源" value="选中的图层" className="h-[19px] w-[137px] pl-1" />
        </div>
        <div className="mt-2 border-b border-[#444]" />
        <label className="mt-[5px] flex items-center gap-[6px]">
          <input type="radio" name="mesh" defaultChecked className="size-[11px] appearance-none rounded-full border-[3px] border-[#eee] bg-[#222]" />
          3D 明信片
        </label>
        <label className="mt-[3px] flex items-center gap-[6px]">
          <input type="radio" name="mesh" className="size-[11px] appearance-none rounded-full border-2 border-[#484848]" />
          3D 模型
        </label>
        <label className="mt-1 flex items-center gap-[6px]">
          <input type="radio" name="mesh" className="size-[11px] appearance-none rounded-full border-2 border-[#484848]" />
          从预设创建网格
        </label>
        <div className="mt-[7px] h-4 bg-[#4b4b4b]" />
        <label className="mt-[6px] flex items-center gap-[6px]">
          <input type="radio" name="mesh" className="size-[11px] appearance-none rounded-full border-2 border-[#484848]" />
          从深度映射创建网格
        </label>
        <div className="mt-[7px] h-4 bg-[#4b4b4b]" />
        <button className="mt-[34px] ml-[26px] h-5 w-[112px] bg-[#454545]">创建</button>
      </fieldset>
      <div className="mt-3 flex h-7 items-center justify-end gap-[15px] border-y border-[#3e3e3e] pr-[24px] text-[#999]">
        <Ic className="size-[14px]"><rect x="1" y="2" width="14" height="12" /><circle cx="8" cy="9" r="3" /><path d="M1 4h14" /></Ic>
        <Ic className="size-[14px]"><path d="M1 13.500h14M5 11h5M7.500 11V3M5 5l2.500-3L10 5" /></Ic>
        <Ic className="size-[14px]"><path d="M1 13.500h9M3 11h5M5.500 11V3M3 5l2.500-3L8 5" /><circle cx="12.500" cy="12" r="2.500" /></Ic>
        <Trash2 className="size-[14px]" />
      </div>
      <div className="h-[7px]" />
    </aside>
  );
}

/* ---------- save dialog ---------- */

function Folder({ shared }) {
  return (
    <svg viewBox="0 0 15 16" className="h-4 w-[15px] shrink-0">
      <path fill="#e9c55c" d="M3 1h7v14H3z" />
      <path fill="#fde08a" d="M3 3h6v12H3z" />
      <path fill="#f5d170" d="M9 9h2v6H9z" />
      {shared && <path fill="#2f7fd0" d="M10 7h2v2h-2zM8 12h2.500v2.500H8zM12 12h2.500v2.500H12z" />}
    </svg>
  );
}

function Drive({ win }) {
  return (
    <svg viewBox="0 0 15 16" className="h-4 w-[15px] shrink-0">
      {win && <path fill="#1fb4d6" d="M0 2h2.500v2.500H0zM3.200 2h2.500v2.500H3.200zM0 5.200h2.500v2.500H0zM3.200 5.200h2.500v2.500H3.200z" />}
      <path fill="#d8d8d8" d="M0 10.500l9-2.500 6 2-7 3z" />
      <path fill="#4a4a4a" d="M0 10.500l8 2.500v2l-8-2z" />
      <path fill="#a5a5a5" d="M8 13l7-3v2l-7 3z" />
    </svg>
  );
}

function Glyph({ children }) {
  return <svg viewBox="0 0 15 16" className="h-4 w-[15px] shrink-0">{children}</svg>;
}

const tree = [
  { t: 'application', i: <Folder /> },
  { t: '共享文件夹', i: <Folder shared /> },
  { t: '我的模板', i: <Folder /> },
  { t: '我的云图片', i: <Folder /> },
  { t: '应用', i: <Folder /> },
  { t: 'OneDrive - Personal', root: true, i: <Glyph><path fill="#0a64b8" d="M3 8a4 4 0 0 1 7.500-2l1 1.500L6 13z" /><path fill="#1b8fe3" d="M0 10.500A2.500 2.500 0 0 1 3.500 8L9 9l2.500-1.500A3 3 0 0 1 13 13H2.500A2.500 2.500 0 0 1 0 10.500z" /></Glyph> },
  { t: '此电脑', root: true, open: true, i: <Glyph><path fill="#5fb0e6" d="M4 1l10 3v8L4 9z" /><path fill="#9ed2f2" d="M5 2.500l8 2.400v3L5 6z" /><path fill="#b9c4cc" d="M0 12l4-2 9 3-4 2z" /></Glyph> },
  { t: '3D 对象', i: <Glyph><path fill="#35c3d6" d="M1 4l6.500-3L14 4v8l-6.500 3L1 12z" /><path fill="#a8ecf2" d="M1 4l6.500 2.500V15L1 12z" /><path fill="#0f9bb0" d="M7.500 6.500L14 4v8l-6.500 3z" /></Glyph> },
  { t: '视频', i: <Glyph><path fill="#444" d="M0 1h15v14H0z" /><path fill="#6c86b5" d="M3 2h9v5.500H3z" /><path fill="#7a8f5a" d="M3 8.500h9V14H3z" /><path stroke="#eee" strokeDasharray="1.500 1.500" d="M1.500 1v14M13.500 1v14" /></Glyph> },
  { t: '图片', i: <Glyph><path fill="#d5e6f3" stroke="#9ab" strokeWidth=".8" d="M.5 3h14v10H.5z" /><path fill="#5b9bd5" d="M1.500 4h12v2.500h-12z" /><path fill="#3c6272" d="M1.500 10l5-2 7 2.500V12h-12z" /></Glyph> },
  { t: '文档', i: <Glyph><path fill="#f4f8fb" stroke="#8fa3b3" strokeWidth=".9" d="M2 1h8l3 3v11H2z" /><path stroke="#5b9bd5" d="M4 5h5M4 8h7M4 10.500h3M4 13h7" /><path fill="#6fa8dc" d="M8 8.500h4v4H8z" /></Glyph> },
  { t: '下载', i: <Glyph><path fill="#3b8edb" d="M5 1h5v6h4l-6.500 7L1 7h4z" /></Glyph> },
  { t: '音乐', i: <Glyph><path fill="#1e90e0" d="M7.500 1h1.500c.5 2.500 4 3.500 3.500 7.500-.6-1.700-1.800-2.500-3.500-2.700V12.500c0 1.500-1.500 2.500-3.200 2.500S3 14 3 12.700s1.500-2.400 3-2.400c.6 0 1.100.1 1.500.3z" /></Glyph> },
  { t: '桌面', sel: true, i: <Glyph><path fill="#1ba1e8" stroke="#0c6fb8" d="M.5 2.500h14v10.500H.5z" /><path fill="#3fb4f0" d="M1 3h13L1 10z" /></Glyph> },
  { t: '项目 (C:)', i: <Drive win /> },
  { t: '工作相关 (D:)', i: <Drive /> },
  { t: '模型素材管理库', i: <Drive /> },
  { t: '新加卷 (F:)', i: <Drive /> },
  { t: 'T (G:)', i: <Drive /> },
  { t: '素材资料机械盘', i: <Drive /> },
];

function FolderTree() {
  return (
    <div className="flex w-[156px] shrink-0">
      <ul className="min-w-0 flex-1 overflow-hidden pt-px">
        {tree.map((n) => (
          <li
            key={n.t}
            className={`flex h-6 items-center whitespace-nowrap ${n.root ? 'mt-2 pl-[6px]' : 'pl-[13px]'} ${n.sel ? 'bg-[#d9d9d9]' : ''}`}
          >
            <Chev className={`size-3 ${n.open ? 'text-[#555]' : '-rotate-90 text-[#b5b5b5]'}`} />
            <span className={`flex ${n.root ? 'ml-[6px]' : 'ml-2'}`}>{n.i}</span>
            <span className="ml-1">{n.t}</span>
          </li>
        ))}
      </ul>
      <div className="flex w-4 flex-col items-center bg-[#f0f0f0] py-1 text-[#444]">
        <Chev bold className="size-[10px] rotate-180" />
        <div className="mt-[109px] h-[328px] w-full bg-[#cdcdcd]" />
        <Chev bold className="mt-auto size-[10px]" />
      </div>
    </div>
  );
}

function FileList() {
  return (
    <div className="flex flex-1 flex-col pl-[14px]">
      <table className="table-fixed text-left text-[#4c607a]">
        <colgroup>
          <col className="w-[262px]" /><col className="w-36" /><col className="w-[120px]" /><col className="w-20" /><col />
        </colgroup>
        <thead>
          <tr className="h-7">
            <th className="relative border-r border-[#e5e5e5] pl-[7px] font-normal">
              名称
              <Chev className="absolute -top-px left-[127px] size-[9px] rotate-180 text-[#888]" />
            </th>
            <th className="border-r border-[#e5e5e5] pl-[6px] font-normal">修改日期</th>
            <th className="border-r border-[#e5e5e5] pl-[6px] font-normal">类型</th>
            <th className="border-r border-[#e5e5e5] pl-[6px] font-normal">大小</th>
            <th />
          </tr>
        </thead>
      </table>
      <p className="mt-[15px] mr-[18px] text-center leading-4 text-[#6d6d6d]">没有与搜索条件匹配的项。</p>
    </div>
  );
}

function Check({ children, checked, disabled, blue }) {
  return (
    <label className={`flex items-start gap-[3px] ${disabled ? 'text-[#838383]' : blue ? 'text-[#1b6ac1]' : ''}`}>
      <span className="relative mt-[2px] flex shrink-0">
        <input
          type="checkbox"
          defaultChecked={checked}
          disabled={disabled}
          className={`size-[13px] appearance-none border bg-white ${disabled ? 'border-[#dcdcdc]' : 'border-[#333]'}`}
        />
        {checked && (
          <Ic className="pointer-events-none absolute top-0 left-0 size-[13px]">
            <path d="M3.500 8l3 3.500L12.500 4" stroke={disabled ? '#bbb' : '#222'} strokeWidth="1.600" />
          </Ic>
        )}
      </span>
      <span>{children}</span>
    </label>
  );
}

function SaveDialog() {
  const nameRef = useRef(null);

  useEffect(() => {
    nameRef.current.focus();
    nameRef.current.select();
  }, []);

  return (
    <div role="dialog" aria-label="存储副本" className="absolute top-[268px] left-[609px] flex w-[1248px] flex-col bg-white text-xs leading-4 text-[#222]">
      <div className="flex h-7 items-center gap-1 pr-[6px] pl-2">
        <PsLogo />
        <span>存储副本</span>
        <button aria-label="关闭" className="ml-auto"><X className="size-[22px]" strokeWidth={1.200} /></button>
      </div>

      <div className="flex h-[35px] items-center pr-[9px] pl-3">
        <button aria-label="后退" className="text-[#ccc]"><Ic><path d="M15 8H2M7 3L2 8l5 5" /></Ic></button>
        <button aria-label="前进" className="ml-[13px] text-[#ccc]"><Ic><path d="M1 8h13M9 3l5 5-5 5" /></Ic></button>
        <Chev className="ml-[12px] size-[6px] text-[#ccc]" />
        <button aria-label="上移" className="ml-[10px] text-[#555]"><Ic><path d="M8 15V2M3 7l5-5 5 5" /></Ic></button>
        <div className="ml-1 flex h-[22px] flex-1 items-center border border-[#d9d9d9] pr-[3px]">
          <Folder />
          {['此电脑', '桌面', 'map'].map((p) => (
            <React.Fragment key={p}>
              <Chev bold className="mx-[6px] size-2 -rotate-90 text-[#444]" />
              <a href="#path" className="px-[1px]">{p}</a>
            </React.Fragment>
          ))}
          <Chev bold className="mr-[6px] ml-auto size-[9px] text-[#444]" />
          <button aria-label="刷新" className="flex h-full items-center border-l border-[#d9d9d9] pl-[5px] text-[#444]">
            <Ic className="size-[13px]"><path d="M11.500 3.500A6 6 0 1 1 5 3M5 0v4h-4" strokeWidth="1.800" /></Ic>
          </button>
        </div>
        <label className="ml-[9px] flex h-[22px] w-[202px] items-center border border-[#d9d9d9] pr-[6px] pl-[6px]">
          <input placeholder="在 map 中搜索" aria-label="搜索" className="min-w-0 flex-1 outline-none placeholder:text-[#777]" />
          <Ic className="size-3 text-[#444]"><circle cx="10" cy="6" r="4.700" strokeWidth="2" /><path d="M6.500 9.500L1 15" strokeWidth="2.500" /></Ic>
        </label>
      </div>

      <div className="flex h-8 items-center bg-[#f4f6f7] pr-[16px] pl-[19px] text-[#1e395b]">
        <button className="flex items-center gap-1">组织<span className="size-0 border-x-[3px] border-t-[4px] border-x-transparent border-t-[#1e395b]" /></button>
        <button className="ml-[30px]">新建文件夹</button>
        <button aria-label="更改视图" className="ml-auto flex items-center gap-3 text-[#999]">
          <Ic><path d="M1 2.500h3v2H1zM1 7h3v2H1zM1 11.500h3v2H1z" /><path strokeDasharray="4 1" d="M6 2.500h9M6 5h9M6 7.500h9M6 10.500h9M6 13.500h9" /></Ic>
          <span className="size-0 border-x-[3px] border-t-[4px] border-x-transparent border-t-[#333]" />
        </button>
        <button aria-label="帮助" className="ml-[28px] flex size-4 items-center justify-center rounded-full bg-[#0a64b8] text-xs leading-none font-bold text-white">?</button>
      </div>

      <div className="flex h-[510px]">
        <FolderTree />
        <FileList />
      </div>

      <div className="bg-[#f0f0f0] pt-3 pb-3">
        <div className="flex items-center pr-[5px]">
          <label htmlFor="filename" className="w-5 flex-none basis-[120px] text-right">文件名(N):</label>
          <div className="relative ml-[5px] flex-1">
            <input
              id="filename"
              ref={nameRef}
              defaultValue="未标题-1.psd"
              className="block h-[22px] w-full border border-[#4a9bd6] bg-white px-[2px] outline-none selection:bg-[#0078d7] selection:text-white"
            />
            <Chev className="pointer-events-none absolute top-[7px] right-1 size-[9px] text-[#555]" />
          </div>
        </div>
        <div className="mt-[2px] flex items-center pr-[5px]">
          <label htmlFor="filetype" className="w-5 flex-none basis-[120px] text-right">保存类型(T):</label>
          <div className="relative ml-[5px] flex-1">
            <select id="filetype" className="block h-[21px] w-full appearance-none border border-[#adadad] bg-[#e1e1e1] px-[2px] outline-none">
              <option>Photoshop (*.PSD;*.PDD;*.PSDT)</option>
            </select>
            <Chev className="pointer-events-none absolute top-[6px] right-1 size-[9px] text-[#555]" />
          </div>
        </div>

        <div className="mt-[13px] flex pl-[125px]">
          <span className="w-[244px]">存储选项</span>
          <div className="flex w-[251px]">
            <span className="w-[33px] text-[#838383]">存储:</span>
            <div className="flex flex-col gap-[6px]">
              <Check disabled>注释(N)</Check>
              <Check disabled>Alpha 通道(E)</Check>
              <Check disabled>专色(P)</Check>
              <Check checked blue>图层(L)</Check>
            </div>
          </div>
          <div className="flex w-[250px]">
            <span className="w-[33px] text-[#838383]">颜色:</span>
            <div className="flex flex-col gap-[6px]">
              <Check disabled>使用校样设置(O):&nbsp; 工<br />作中的 CMYK</Check>
              <Check blue>ICC 配置文件(C):<br />DELL U2723QE<br />Color Profile, D6...</Check>
            </div>
          </div>
          <span className="w-[33px] text-[#838383]">其它:</span>
          <Check disabled checked>缩览图(T)</Check>
        </div>

        <div className="mt-7 flex items-center pr-[19px] pl-[9px]">
          <button className="mt-1 flex items-center gap-[6px]"><Chev bold className="size-[9px] rotate-180" />隐藏文件夹</button>
          <button className="ml-auto h-[25px] w-[87px] border-2 border-[#0078d7] bg-[#e1e1e1]">保存(S)</button>
          <button className="ml-[13px] h-[25px] w-[87px] border border-[#adadad] bg-[#e1e1e1]">取消</button>
        </div>
      </div>
    </div>
  );
}

function Watermark() {
  return (
    <div className="pointer-events-none absolute top-[1376px] left-3 flex items-center gap-3 opacity-40">
      <svg viewBox="0 0 52 52" className="size-[52px]">
        <rect width="52" height="52" rx="9" fill="#d0d0d0" />
        <circle cx="20" cy="15" r="8" fill="#333" />
        <circle cx="21" cy="35" r="9" fill="#333" />
        <circle cx="8" cy="26" r="4" fill="#333" />
        <path d="M24 8c10 2 20 8 22 16v5C40 20 32 20 24 20z" fill="#333" />
      </svg>
      <span className="font-['Roboto',sans-serif] text-[54px] leading-[52px] font-bold text-[#c8c8c8]">tafc.cc</span>
    </div>
  );
}

export default function App() {
  return (
    <div className="relative flex min-h-screen flex-col overflow-hidden bg-black py-5 font-['Open_Sans','Noto_Sans_CJK_SC',sans-serif] text-[#dcdcdc]">
      <div className="flex flex-1 flex-col bg-[#535353]">
        <MenuBar />
        <OptionsBar />
        <div className="flex flex-1">
          <ToolBar />
          <Workspace />
          <IconDock />
          <RightDock />
        </div>
      </div>
      <PropertiesPanel />
      <ThreeDPanel />
      <SaveDialog />
      <svg viewBox="0 0 12 18" className="absolute top-[906px] left-[847px] h-[18px] w-3">
        <path d="M.7.700v14l3.300-3 2.200 5 2.200-1-2.200-4.800h4.500z" fill="#fff" stroke="#000" />
      </svg>
      <Watermark />
    </div>
  );
}
